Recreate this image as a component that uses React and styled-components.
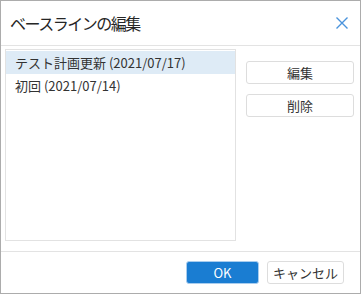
import React, { useState } from 'react'
import styled, { createGlobalStyle } from 'styled-components'

const GlobalStyle = createGlobalStyle`
    html, body {
        margin: 0;
        padding: 0;
        background: #ffffff;
    }
    * {
        box-sizing: border-box;
    }
`

const fontStack = `"Noto Sans CJK JP", "Noto Sans", sans-serif`

const Dialog = styled.div`
    width: 361px;
    height: 294px;
    border: 1px solid #acacac;
    background: #ffffff;
    display: flex;
    flex-direction: column;
    font-family: ${fontStack};
    color: #333333;
`

const Header = styled.div`
    height: 45px;
    flex-shrink: 0;
    display: flex;
    align-items: center;
    justify-content: space-between;
    padding: 0 11px 1px 9px;
    border-bottom: 1px solid #e3e3e3;
`

const Title = styled.h1`
    margin: 0;
    font-size: 16px;
    font-weight: 400;
    letter-spacing: -1.5px;
    color: #262626;
`

const CloseButton = styled.button`
    border: none;
    background: none;
    padding: 0;
    width: 14px;
    height: 14px;
    display: flex;
    cursor: pointer;
`

const Body = styled.div`
    flex: 1;
    display: flex;
    padding: 3px 5px 10px 4px;
    gap: 10px;
`

const List = styled.ul`
    margin: 0;
    padding: 1px 0;
    list-style: none;
    width: 231px;
    height: 192px;
    border: 1px solid #e2e2e2;
`

const Row = styled.li`
    height: 23px;
    line-height: 23px;
    padding-left: 9px;
    font-size: 13px;
    cursor: pointer;
    background: ${props => props.$selected ? '#deebf6' : 'transparent'};
`

const SideButtons = styled.div`
    display: flex;
    flex-direction: column;
    gap: 10px;
    padding-top: 12px;
`

const Button = styled.button`
    font-family: ${fontStack};
    font-size: 13px;
    height: 23px;
    width: ${props => props.$width || 108}px;
    padding: 0;
    border-radius: 3px;
    border: 1px solid ${props => props.$primary ? '#a9cdee' : '#dddddd'};
    background: ${props => props.$primary ? '#1a7dd2' : '#ffffff'};
    color: ${props => props.$primary ? '#ffffff' : '#333333'};
    box-shadow: ${props => props.$primary ? 'inset 0 0 0 1px #1a7dd2' : 'none'};
    cursor: pointer;
`

const Footer = styled.div`
    height: 42px;
    flex-shrink: 0;
    border-top: 1px solid #e3e3e3;
    display: flex;
    align-items: center;
    justify-content: flex-end;
    gap: 8px;
    padding: 0 16px 0 0;
`

const items = [
    'テスト計画更新 (2021/07/17)',
    '初回 (2021/07/14)',
]

export default function App() {
    const [selected, setSelected] = useState(0)

    return (
        <>
            <GlobalStyle />
            <Dialog>
                <Header>
                    <Title>ベースラインの編集</Title>
                    <CloseButton aria-label="close">
                        <svg width="14" height="14" viewBox="0 0 14 14">
                            <path d="M1.5 1.5 L12.5 12.5 M12.5 1.5 L1.5 12.5" stroke="#4a93dc" strokeWidth="1.4" fill="none" />
                        </svg>
                    </CloseButton>
                </Header>
                <Body>
                    <List>
                        {items.map((item, i) => (
                            <Row key={item} $selected={i === selected} onClick={() => setSelected(i)}>{item}</Row>
                        ))}
                    </List>
                    <SideButtons>
                        <Button>編集</Button>
                        <Button>削除</Button>
                    </SideButtons>
                </Body>
                <Footer>
                    <Button $primary $width={73}>OK</Button>
                    <Button $width={77}>キャンセル</Button>
                </Footer>
            </Dialog>
        </>
    )
}
